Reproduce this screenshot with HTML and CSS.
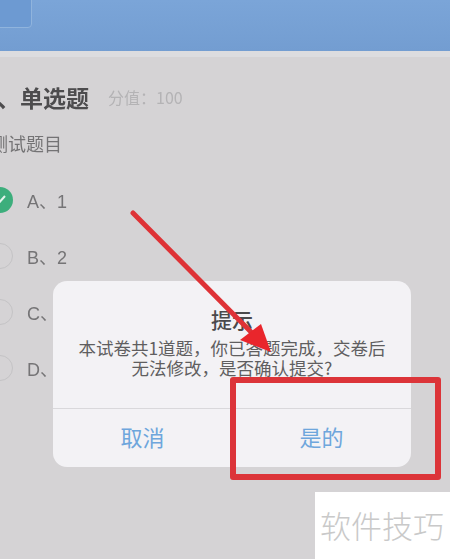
FILE: index.html
```html
<!DOCTYPE html>
<html lang="zh-CN">
<head>
  <meta charset="UTF-8" />
  <meta name="viewport" content="width=device-width, initial-scale=1.0" />
  <title>单选题</title>
  <link rel="stylesheet" href="styles.css">
</head>
<body>
  <div class="screen">
    <div class="page">
      <header class="top-bar">
        <div class="top-btn"></div>
      </header>
      <div class="top-strip"></div>

      <section class="question">
        <div class="question-head">
          <h1>一、单选题</h1>
          <span class="score">分值：100</span>
        </div>
        <p class="question-text">测试题目</p>
        <ul class="options">
          <li class="option">
            <span class="radio checked">
              <svg viewBox="0 0 26 26" width="26" height="26"><path d="M6 14l4 4 8-9" fill="none" stroke="#e4f3ec" stroke-width="2"/></svg>
            </span>
            <span>A、1</span>
          </li>
          <li class="option"><span class="radio"></span><span>B、2</span></li>
          <li class="option"><span class="radio"></span><span>C、3</span></li>
          <li class="option"><span class="radio"></span><span>D、4</span></li>
        </ul>
      </section>

      <div class="dialog">
        <div class="dialog-body">
          <h2>提示</h2>
          <p>本试卷共1道题，你已答题完成，交卷后<br>无法修改，是否确认提交?</p>
        </div>
        <div class="dialog-actions">
          <button>取消</button>
          <button>是的</button>
        </div>
      </div>
    </div>

    <!-- annotations on top of the screenshot -->
    <div class="mark-box"></div>
    <svg class="mark-arrow" viewBox="0 0 450 559" width="450" height="559">
      <path d="M133 213L256 337" stroke="#de3236" stroke-width="5" stroke-linecap="round" fill="none"/>
      <path d="M271 352L240 340L261 324Z" fill="#e9262c"/>
    </svg>

    <div class="watermark">软件技巧</div>
  </div>
</body>
</html>
```

FILE: styles.css
```css
* {
  box-sizing: border-box;
}
body {
  margin: 0;
  font-family: "Noto Sans CJK SC", "Liberation Sans", sans-serif;
  background-color: #d5d3d5;
}
.screen {
  position: relative;
  width: 450px;
  height: 559px;
  overflow: hidden;
}
.page {
  position: relative;
  height: 559px;
  background-color: #d5d3d5;
  filter: blur(0.7px);
}
.top-bar {
  display: flow-root;
  height: 51px;
  background: linear-gradient(#7ba5d8, #739dd1);
}
.top-btn {
  width: 42px;
  height: 38px;
  margin: -10px 0 0 -10px;
  background-color: #6d9ad2;
  border: 1px solid #90b4dd;
  border-radius: 4px;
}
.top-strip {
  height: 6px;
  background-color: #dcdcdf;
}
.question-head {
  display: flex;
  align-items: center;
  gap: 19px;
  margin: 24px 0 0 -26px;
  height: 32px;
}
h1 {
  margin: 0;
  font-size: 23px;
  font-weight: 700;
  line-height: 32px;
  color: #4d4c4e;
}
.score {
  font-size: 16px;
  color: #b4b3b5;
}
.question-text {
  margin: 17px 0 0 -10px;
  font-size: 18px;
  line-height: 26px;
  color: #747375;
}
.options {
  list-style: none;
  margin: 16px 0 0;
  padding: 0;
}
.option {
  display: flex;
  align-items: center;
  gap: 14px;
  height: 56px;
  font-family: "Liberation Sans", "Noto Sans CJK SC", sans-serif;
  font-size: 18px;
  color: #757476;
}
.radio {
  flex: none;
  width: 26px;
  height: 26px;
  margin-left: -13px;
  border: 1px solid #c4c3c5;
  border-radius: 50%;
}
.radio.checked {
  background-color: #3dae7c;
  border: none;
}
.radio svg {
  display: block;
}
.dialog {
  position: absolute;
  left: 53px;
  top: 281px;
  width: 358px;
  height: 186px;
  display: flex;
  flex-direction: column;
  background-color: #f3f2f5;
  border-radius: 14px;
}
.dialog-body {
  height: 128px;
  padding-top: 23px;
  text-align: center;
  border-bottom: 1px solid #d9d8db;
}
h2 {
  margin: 0;
  font-size: 21px;
  font-weight: 500;
  line-height: 30px;
  color: #4a494b;
}
.dialog-body p {
  margin: 4px 0 0;
  font-size: 17.5px;
  line-height: 20px;
  white-space: nowrap;
  color: #5f5e60;
}
.dialog-actions {
  flex: 1;
  display: flex;
  padding-bottom: 4px;
}
.dialog-actions button {
  flex: 1;
  border: none;
  background: none;
  font-family: inherit;
  font-size: 22px;
  color: #6ea6dc;
}
.mark-box {
  position: absolute;
  left: 230px;
  top: 377px;
  width: 211px;
  height: 103px;
  border: 6px solid #dc3439;
  border-radius: 3px;
}
.mark-arrow {
  position: absolute;
  left: 0;
  top: 0;
}
.watermark {
  position: absolute;
  right: 0;
  bottom: 0;
  width: 135px;
  height: 67px;
  padding-left: 5px;
  background-color: #fff;
  font-size: 31px;
  font-weight: 300;
  line-height: 66px;
  white-space: nowrap;
  color: #c9c9c9;
}
```
